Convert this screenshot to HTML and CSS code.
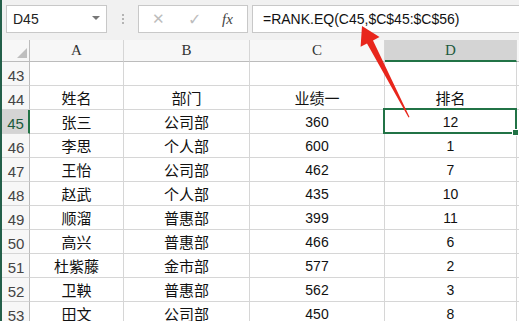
FILE: index.html
```html
<!DOCTYPE html>
<html lang="zh">
<head>
<meta charset="utf-8">
<link rel="stylesheet" href="styles.css">
</head>
<body>
<div class="app">
  <div class="fbar">
    <div class="namebox"><span class="nb-text">D45</span><span class="nb-arrow"></span></div>
    <div class="dots"><i></i><i></i><i></i></div>
    <div class="btns">
      <span class="b-x">✕</span>
      <span class="b-ok">✓</span>
      <span class="b-fx">fx</span>
    </div>
    <div class="formula">=RANK.EQ(C45,$C$45:$C$56)</div>
  </div>
  <div class="sheet">
    <div class="ch corner"><span class="tri"></span></div>
    <div class="ch">A</div>
    <div class="ch">B</div>
    <div class="ch">C</div>
    <div class="ch sel">D</div>
    <div class="ch last"></div>

    <div class="rh">43</div><div class="c"></div><div class="c"></div><div class="c"></div><div class="c"></div><div class="c last"></div>
    <div class="rh">44</div><div class="c">姓名</div><div class="c">部门</div><div class="c">业绩一</div><div class="c">排名</div><div class="c last"></div>
    <div class="rh sel">45</div><div class="c">张三</div><div class="c">公司部</div><div class="c num">360</div><div class="c num active">12</div><div class="c last"></div>
    <div class="rh">46</div><div class="c">李思</div><div class="c">个人部</div><div class="c num">600</div><div class="c num">1</div><div class="c last"></div>
    <div class="rh">47</div><div class="c">王怡</div><div class="c">公司部</div><div class="c num">462</div><div class="c num">7</div><div class="c last"></div>
    <div class="rh">48</div><div class="c">赵武</div><div class="c">个人部</div><div class="c num">435</div><div class="c num">10</div><div class="c last"></div>
    <div class="rh">49</div><div class="c">顺溜</div><div class="c">普惠部</div><div class="c num">399</div><div class="c num">11</div><div class="c last"></div>
    <div class="rh">50</div><div class="c">高兴</div><div class="c">普惠部</div><div class="c num">466</div><div class="c num">6</div><div class="c last"></div>
    <div class="rh">51</div><div class="c">杜紫藤</div><div class="c">金市部</div><div class="c num">577</div><div class="c num">2</div><div class="c last"></div>
    <div class="rh">52</div><div class="c">卫鞅</div><div class="c">普惠部</div><div class="c num">562</div><div class="c num">3</div><div class="c last"></div>
    <div class="rh">53</div><div class="c">田文</div><div class="c">公司部</div><div class="c num">450</div><div class="c num">8</div><div class="c last"></div>
  </div>
  <svg class="arrow" width="519" height="321" viewBox="0 0 519 321">
    <polygon points="362,26 379.5,37 373,40.6 409.5,117 408.5,117.4 367,43.6 360.6,46.8" fill="#e8261c"/>
  </svg>
</div>
</body>
</html>
```
FILE: styles.css
```css
html, body {
  margin: 0;
  padding: 0;
  background: #ffffff;
}
body {
  width: 519px;
  height: 321px;
  overflow: hidden;
  font-family: "Liberation Sans", "Noto Sans CJK SC", sans-serif;
}
.app {
  position: relative;
  width: 517px;
  height: 321px;
  border-left: 2px solid #24604a;
  overflow: hidden;
}
.fbar {
  height: 40px;
  box-sizing: border-box;
  background: #f1f1f1;
  display: flex;
  align-items: flex-start;
  padding: 5px 0 0 4px;
}
.namebox {
  width: 101px;
  height: 28px;
  box-sizing: border-box;
  border: 1px solid #c8c8c8;
  background: #fff;
  display: flex;
  align-items: center;
  justify-content: space-between;
  padding: 0 6px 0 6px;
  font-size: 14px;
  color: #222;
}
.nb-arrow {
  width: 0;
  height: 0;
  border-left: 4px solid transparent;
  border-right: 4px solid transparent;
  border-top: 4px solid #777;
  margin-bottom: 3px;
}
.dots {
  width: 31px;
  height: 28px;
  display: flex;
  flex-direction: column;
  align-items: center;
  justify-content: center;
  gap: 2px;
}
.dots i {
  display: block;
  width: 2px;
  height: 2px;
  background: #b4b4b4;
}
.btns {
  width: 110px;
  height: 28px;
  box-sizing: border-box;
  border: 1px solid #c8c8c8;
  background: #fff;
  display: flex;
  align-items: center;
  padding-left: 13px;
}
.b-x {
  width: 36px;
  color: #bdbdbd;
  font-size: 15px;
  font-family: "DejaVu Sans", sans-serif;
}
.b-ok {
  width: 34px;
  color: #bdbdbd;
  font-size: 16px;
  font-family: "DejaVu Sans", sans-serif;
}
.b-fx {
  font-family: "Liberation Serif", serif;
  font-style: italic;
  font-size: 15px;
  color: #444;
}
.formula {
  margin-left: 4px;
  flex: 1;
  height: 28px;
  box-sizing: border-box;
  border: 1px solid #c8c8c8;
  border-right: none;
  background: #fff;
  font-size: 14px;
  line-height: 26px;
  padding-left: 10px;
  color: #111;
  white-space: nowrap;
}
.sheet {
  display: grid;
  grid-template-columns: 28px 94px 126px 135px 132px 1fr;
  grid-template-rows: 22px repeat(11, 24px);
}
.sheet > div {
  box-sizing: border-box;
}
.ch {
  background: #f7f7f7;
  border-right: 1px solid #d6d6d6;
  border-bottom: 1px solid #bcbcbc;
  font-family: "Liberation Serif", serif;
  font-size: 15px;
  color: #333;
  display: flex;
  align-items: center;
  justify-content: center;
}
.ch.sel {
  background: #d4d4d4;
  border-bottom: 2px solid #217346;
  color: #1d5a3c;
}
.ch.last {
  border-right: none;
}
.corner {
  position: relative;
  border-right: 1px solid #bcbcbc;
}
.tri {
  position: absolute;
  right: 2px;
  bottom: 3px;
  width: 0;
  height: 0;
  border-left: 10px solid transparent;
  border-bottom: 10px solid #bfbfbf;
}
.rh {
  background: #f7f7f7;
  border-right: 1px solid #bcbcbc;
  border-bottom: 1px solid #d6d6d6;
  font-family: "Liberation Sans Narrow", "Liberation Sans", sans-serif;
  font-size: 15px;
  line-height: 15px;
  color: #444;
  display: flex;
  align-items: flex-end;
  justify-content: center;
  padding-bottom: 2px;
  padding-left: 1px;
}
.rh.sel {
  background: #d4d4d4;
  border-right: 2px solid #217346;
  color: #1d5a3c;
}
.c {
  border-right: 1px solid #d6d6d6;
  border-bottom: 1px solid #d6d6d6;
  font-size: 15px;
  line-height: 15px;
  color: #111;
  display: flex;
  align-items: flex-end;
  justify-content: center;
  padding-bottom: 3px;
}
.c.num {
  font-size: 14px;
}
.c.last {
  border-right: none;
}
.c.active {
  position: relative;
}
.c.active::after {
  content: "";
  position: absolute;
  left: -2px;
  top: -2px;
  right: -1px;
  bottom: -1px;
  border: 2px solid #217346;
}
.c.active::before {
  content: "";
  position: absolute;
  right: -3px;
  bottom: -3px;
  width: 5px;
  height: 5px;
  background: #217346;
  border: 1px solid #fff;
  z-index: 1;
}
.arrow {
  position: absolute;
  left: -2px;
  top: 0;
  pointer-events: none;
}
```
